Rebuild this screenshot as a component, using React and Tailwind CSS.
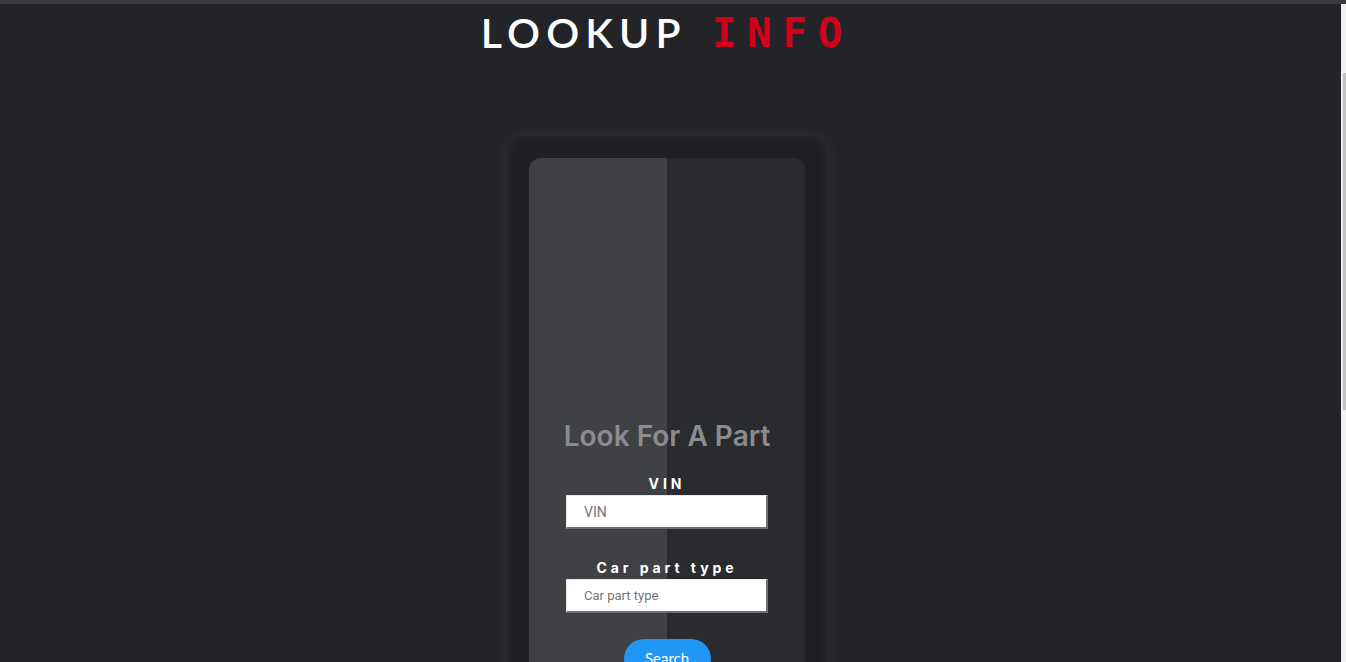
import React, { useState } from "react";

const App = () => {
  const [vin, setVin] = useState("");
  const [partType, setPartType] = useState("");

  return (
    <div className="relative h-[662px] w-full overflow-hidden bg-[#232428] font-['Lato','Liberation_Sans',sans-serif]">
      {/* browser top strip */}
      <div className="h-[4px] w-full bg-[#3b3b3b]" />

      <div className="flex flex-col items-center pr-[12px]">
        <h1 className="mt-[6px] flex items-center text-[41px] leading-[46px]">
          <span className="font-semibold tracking-[0.15em] text-white">LOOKUP</span>
          <span className="ml-[25px] font-['DejaVu_Sans_Mono',monospace] font-bold tracking-[0.26em] text-[#d0021b]">
            INFO
          </span>
        </h1>

        {/* card */}
        <div className="mt-[80px] rounded-[16px] bg-[#1f2023] p-[22px] shadow-[0_0_22px_rgba(255,255,255,0.06),inset_0_0_14px_rgba(255,255,255,0.05)]">
          <div className="relative h-[520px] w-[276px] overflow-hidden rounded-[12px] bg-[linear-gradient(to_right,#404145_50%,#2a2b2f_50%)]">
            <form
              onSubmit={(e) => e.preventDefault()}
              className="flex flex-col items-center pt-[260px]"
            >
              <h2 className="font-['Inter','Noto_Sans',sans-serif] text-[28px] font-semibold leading-[36px] tracking-normal text-[#8c8c8f]">
                Look For A Part
              </h2>

              <label className="mt-[21px] font-['Inter','Noto_Sans',sans-serif] text-[14px] font-bold leading-[18px] tracking-[0.28em] text-white">
                VIN
              </label>
              <input
                value={vin}
                onChange={(e) => setVin(e.target.value)}
                placeholder="VIN"
                className="mt-[2px] h-[34px] w-[202px] border border-b-2 border-r-2 border-[#e8e8e8] border-b-[#707070] border-r-[#707070] bg-white pl-[17px] font-['Roboto',sans-serif] text-[14px] text-black outline-none placeholder:text-[#757575]"
              />

              <label className="mt-[30px] font-['Inter','Noto_Sans',sans-serif] text-[14px] font-bold leading-[18px] tracking-[0.28em] text-white">
                Car part type
              </label>
              <input
                value={partType}
                onChange={(e) => setPartType(e.target.value)}
                placeholder="Car part type"
                className="mt-[2px] h-[34px] w-[202px] border border-b-2 border-r-2 border-[#e8e8e8] border-b-[#707070] border-r-[#707070] bg-white pl-[17px] font-['Roboto',sans-serif] text-[13px] text-black outline-none placeholder:text-[#757575]"
              />

              <button
                type="submit"
                className="mt-[26px] h-[40px] w-[87px] rounded-full bg-[#2196f3] pb-[2px] text-[15px] text-white"
              >
                Search
              </button>
            </form>
          </div>
        </div>
      </div>

      {/* scrollbar */}
      <div className="absolute right-0 top-[4px] bottom-0 w-[5px] bg-[#f1f1f1]">
        <div className="ml-[2px] mt-[69px] h-[337px] w-[3px] bg-[#c1c1c1]" />
      </div>
    </div>
  );
};

export default App;
